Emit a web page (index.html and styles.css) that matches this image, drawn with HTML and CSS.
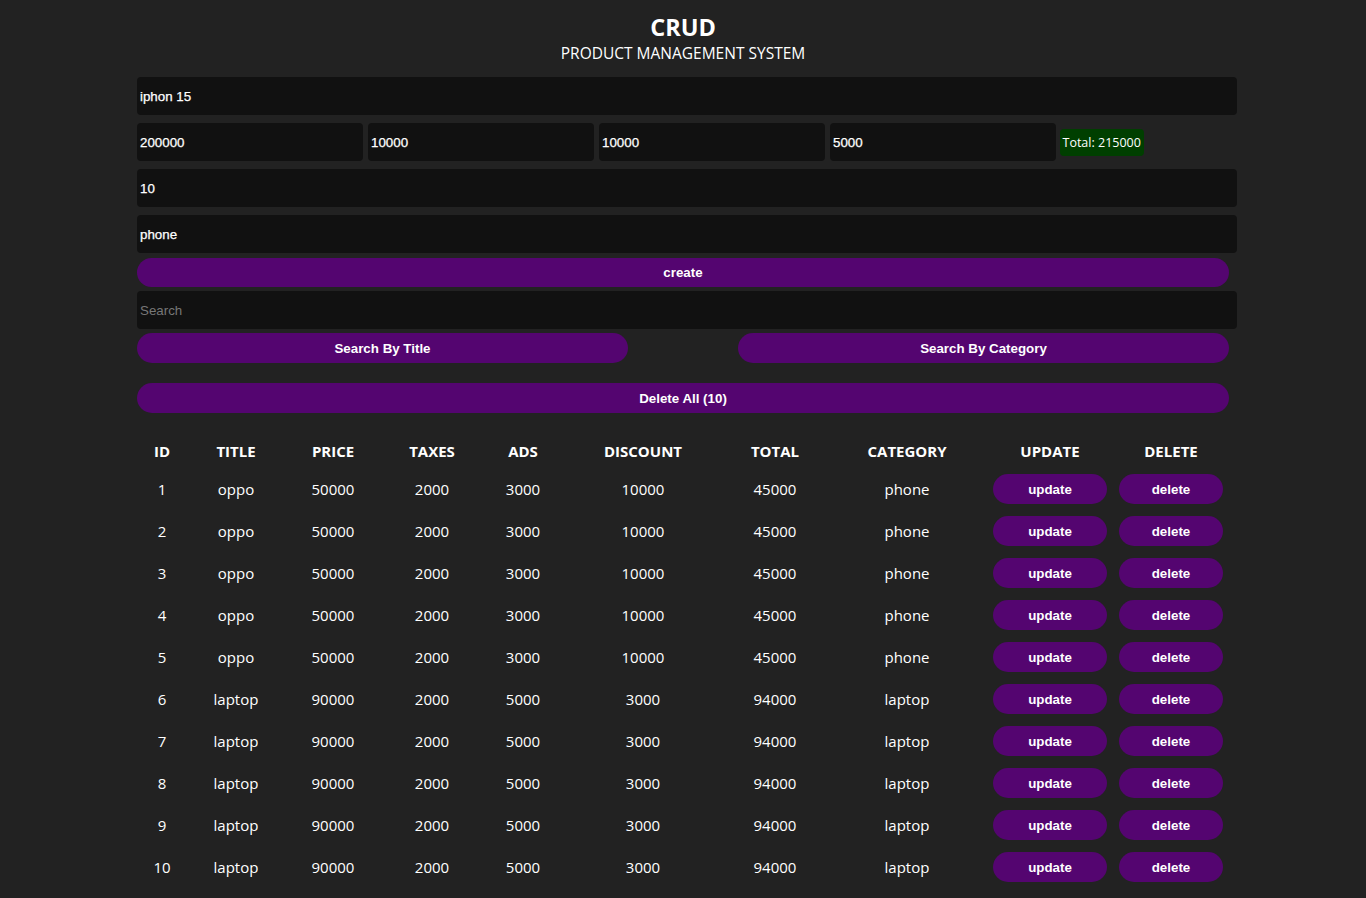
FILE: index.html
```html
<!DOCTYPE html>
<html>
<head>
<meta charset="utf-8">
<link rel="stylesheet" href="styles.css">
</head>
<body>
<div class="crud">
  <div class="head">
    <h2 class="title">CRUD</h2>
    <p class="subtitle">PRODUCT MANAGEMENT SYSTEM</p>
  </div>
  <div class="inputs">
    <input class="field" type="text" value="iphon 15">
    <div class="price-row">
      <input class="field" type="text" value="200000">
      <input class="field" type="text" value="10000">
      <input class="field" type="text" value="10000">
      <input class="field" type="text" value="5000">
      <small class="total">Total: 215000</small>
    </div>
    <input class="field" type="text" value="10">
    <input class="field" type="text" value="phone">
    <button class="btn create">create</button>
  </div>
  <div class="outputs">
    <input class="field search" type="text" placeholder="Search">
    <div class="search-btns">
      <button class="btn">Search By Title</button>
      <button class="btn">Search By Category</button>
    </div>
    <button class="btn delete-all">Delete All (10)</button>
    <table class="products">
      <colgroup>
        <col class="c-id"><col class="c-title"><col class="c-price"><col class="c-taxes"><col class="c-ads"><col class="c-discount"><col class="c-total"><col class="c-cat"><col class="c-upd"><col class="c-del">
      </colgroup>
      <thead>
        <tr><th>ID</th><th>title</th><th>price</th><th>taxes</th><th>ads</th><th>discount</th><th>total</th><th>category</th><th>update</th><th>delete</th></tr>
      </thead>
      <tbody>
        <tr><td>1</td><td>oppo</td><td>50000</td><td>2000</td><td>3000</td><td>10000</td><td>45000</td><td>phone</td><td><button class="btn row-btn">update</button></td><td><button class="btn row-btn">delete</button></td></tr>
        <tr><td>2</td><td>oppo</td><td>50000</td><td>2000</td><td>3000</td><td>10000</td><td>45000</td><td>phone</td><td><button class="btn row-btn">update</button></td><td><button class="btn row-btn">delete</button></td></tr>
        <tr><td>3</td><td>oppo</td><td>50000</td><td>2000</td><td>3000</td><td>10000</td><td>45000</td><td>phone</td><td><button class="btn row-btn">update</button></td><td><button class="btn row-btn">delete</button></td></tr>
        <tr><td>4</td><td>oppo</td><td>50000</td><td>2000</td><td>3000</td><td>10000</td><td>45000</td><td>phone</td><td><button class="btn row-btn">update</button></td><td><button class="btn row-btn">delete</button></td></tr>
        <tr><td>5</td><td>oppo</td><td>50000</td><td>2000</td><td>3000</td><td>10000</td><td>45000</td><td>phone</td><td><button class="btn row-btn">update</button></td><td><button class="btn row-btn">delete</button></td></tr>
        <tr><td>6</td><td>laptop</td><td>90000</td><td>2000</td><td>5000</td><td>3000</td><td>94000</td><td>laptop</td><td><button class="btn row-btn">update</button></td><td><button class="btn row-btn">delete</button></td></tr>
        <tr><td>7</td><td>laptop</td><td>90000</td><td>2000</td><td>5000</td><td>3000</td><td>94000</td><td>laptop</td><td><button class="btn row-btn">update</button></td><td><button class="btn row-btn">delete</button></td></tr>
        <tr><td>8</td><td>laptop</td><td>90000</td><td>2000</td><td>5000</td><td>3000</td><td>94000</td><td>laptop</td><td><button class="btn row-btn">update</button></td><td><button class="btn row-btn">delete</button></td></tr>
        <tr><td>9</td><td>laptop</td><td>90000</td><td>2000</td><td>5000</td><td>3000</td><td>94000</td><td>laptop</td><td><button class="btn row-btn">update</button></td><td><button class="btn row-btn">delete</button></td></tr>
        <tr><td>10</td><td>laptop</td><td>90000</td><td>2000</td><td>5000</td><td>3000</td><td>94000</td><td>laptop</td><td><button class="btn row-btn">update</button></td><td><button class="btn row-btn">delete</button></td></tr>
      </tbody>
    </table>
  </div>
</div>
</body>
</html>
```

FILE: styles.css
```css
* { box-sizing: border-box; }

html, body {
  margin: 0;
  padding: 0;
  background: #222222;
  color: #ffffff;
  font-family: "Open Sans", "Noto Sans", sans-serif;
}

.crud {
  width: 1092px;
  margin: 0 auto;
}

.head {
  text-align: center;
  padding-top: 12px;
}

.title {
  margin: 0;
  font-size: 23.5px;
  line-height: 30px;
  font-weight: 700;
}

.subtitle {
  margin: 0;
  font-size: 15.5px;
  line-height: 22px;
}

.inputs {
  margin-top: 13px;
}

.field {
  display: block;
  width: 1100px;
  height: 38px;
  margin: 0 0 8px 0;
  padding: 0 3px;
  border: none;
  outline: none;
  border-radius: 4px;
  background: #111111;
  color: #ffffff;
  font-family: "Liberation Sans", Arial, sans-serif;
  font-size: 13.33px;
  -webkit-text-stroke: 0.25px #ffffff;
}

.field::placeholder {
  color: #777777;
  -webkit-text-stroke: 0;
}

.price-row {
  display: flex;
  align-items: center;
  margin-bottom: 8px;
}

.price-row .field {
  width: 225.5px;
  margin: 0 5.5px 0 0;
}

.price-row .field:nth-child(4) {
  margin-right: 4px;
}

.total {
  display: inline-block;
  height: 27px;
  line-height: 27px;
  padding: 0 3px;
  border-radius: 4px;
  background: #003f00;
  color: #ffffff;
  font-size: 12.5px;
}

.btn {
  display: block;
  width: 100%;
  height: 30px;
  border: none;
  border-radius: 15px;
  background: #540570;
  color: #ffffff;
  font-family: "Liberation Sans", Arial, sans-serif;
  font-size: 13.33px;
  font-weight: 700;
  cursor: pointer;
}

.create {
  margin-top: -3px;
  height: 29px;
  margin-bottom: 4px;
}

.outputs .search {
  margin-bottom: 4px;
}

.search-btns {
  display: flex;
  justify-content: space-between;
}

.search-btns .btn {
  width: 491px;
}

.delete-all {
  margin-top: 20px;
}

.products {
  width: 1092px;
  margin-top: 21px;
  table-layout: fixed;
  border-collapse: collapse;
  text-align: center;
}

.c-id { width: 50px; }
.c-title { width: 98px; }
.c-price { width: 96px; }
.c-taxes { width: 102px; }
.c-ads { width: 80px; }
.c-discount { width: 160px; }
.c-total { width: 104px; }
.c-cat { width: 160px; }
.c-upd { width: 126px; }
.c-del { width: 116px; }

.products th {
  height: 34px;
  padding: 0;
  font-size: 15px;
  font-weight: 700;
  text-transform: uppercase;
}

.products td {
  height: 42px;
  padding: 0;
  font-size: 15px;
}

.row-btn {
  width: 90%;
  margin: 0 auto;
}
```
